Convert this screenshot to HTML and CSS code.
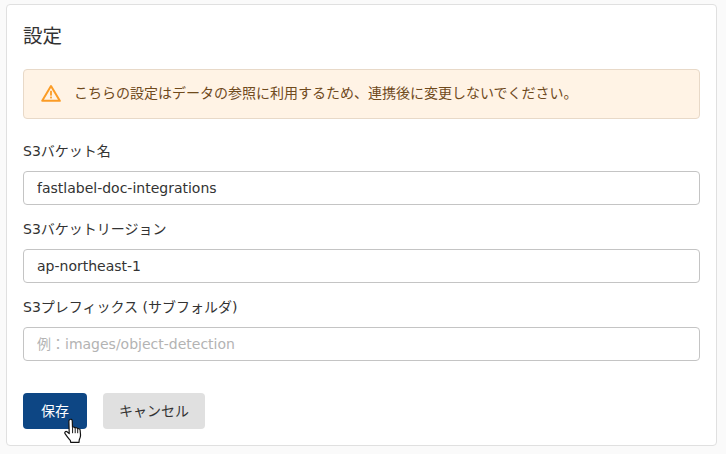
FILE: index.html
```html
<!DOCTYPE html>
<html lang="ja">
<head>
    <meta charset="UTF-8">
    <title>設定</title>
    <link rel="stylesheet" href="styles.css">
</head>
<body>

    <div class="card">
        <h1>設定</h1>

        <div class="alert">
            <svg class="alert-icon" width="20" height="18" viewBox="0 0 20 18">
                <path d="M10 2 L18.8 16.8 H1.2 Z" fill="none" stroke="#fb9c26" stroke-width="2" stroke-linejoin="round"/>
                <rect x="9.1" y="6.8" width="1.8" height="4.8" fill="#fb9c26"/>
                <rect x="9.1" y="12.6" width="1.8" height="1.8" fill="#fb9c26"/>
            </svg>
            <span class="alert-text">こちらの設定はデータの参照に利用するため、連携後に変更しないでください。</span>
        </div>

        <div class="field">
            <label for="bucket">S3バケット名</label>
            <input id="bucket" type="text" value="fastlabel-doc-integrations">
        </div>
        <div class="field">
            <label for="region">S3バケットリージョン</label>
            <input id="region" type="text" value="ap-northeast-1">
        </div>
        <div class="field">
            <label for="prefix">S3プレフィックス (サブフォルダ)</label>
            <input id="prefix" type="text" placeholder="例：images/object-detection">
        </div>

        <div class="actions">
            <button class="btn btn-save">保存</button>
            <button class="btn btn-cancel">キャンセル</button>
            <svg class="cursor" width="22" height="25" viewBox="0 0 20 23">
                <path d="M6 1.5 C7 0.8 8.3 1.3 8.4 2.5 L8.6 8.6 C9.4 8.1 10.6 8.2 11 9.2 C11.8 8.7 13 8.9 13.3 9.9 C14.2 9.5 15.4 9.9 15.6 11 L16 15.5 C16.1 17.4 15.4 18.8 14.8 20.2 L14.6 22.5 H7 L6.6 20.6 C5.2 19.2 3.4 16.6 1.8 14.4 C1 13.2 2.2 11.8 3.6 12.6 L5.6 14.4 L5.3 3 C5.3 2.4 5.5 1.9 6 1.5 Z" fill="#fff" stroke="#111" stroke-width="1.1" stroke-linejoin="round"/>
                <path d="M8.7 9 V14 M11.1 9.4 V14 M13.4 10.2 V14" fill="none" stroke="#111" stroke-width="0.9"/>
            </svg>
        </div>
    </div>

</body>
</html>
```

FILE: styles.css
```css
/* Global Styles */
body {
    font-family: 'DejaVu Sans', 'Noto Sans CJK JP', sans-serif;
    margin: 0;
    padding: 4px 9px 8px 6px;
    background: #fafafa;
    color: #333;
    font-size: 14px;
}

.card {
    background: #fff;
    border: 1px solid #e0e0e0;
    border-radius: 4px;
    padding: 17px 16px 15px 16px;
    height: 442px;
    box-sizing: border-box;
}

h1 {
    font-size: 19.5px;
    font-weight: 400;
    line-height: 30px;
    margin: 0 0 17px 0;
    color: #333;
}

.alert {
    display: flex;
    align-items: center;
    height: 50px;
    box-sizing: border-box;
    padding: 0 0 0 17px;
    gap: 13px;
    background: #fff3e5;
    border: 1px solid #e8d9c8;
    border-radius: 4px;
    color: #6f4a1c;
    margin-bottom: 21px;
}

.alert-icon {
    flex-shrink: 0;
    margin-top: -2px;
}

.alert-text {
    padding-bottom: 4px;
}

.field {
    margin-bottom: 13px;
}

.field label {
    display: block;
    line-height: 22px;
    margin-bottom: 7px;
    height: 24px;
}

.field input {
    display: block;
    width: 100%;
    height: 34px;
    box-sizing: border-box;
    padding: 0 13px;
    border: 1px solid #c4c4c4;
    border-radius: 4px;
    font-family: inherit;
    font-size: 14px;
    color: #333;
    outline: none;
}

.field input::placeholder {
    color: #b3b3b3;
    opacity: 1;
}

.actions {
    position: relative;
    display: flex;
    gap: 16px;
    margin-top: 32px;
}

.btn {
    height: 36px;
    border: none;
    border-radius: 4px;
    padding: 0 0 3px 0;
    font-family: inherit;
    font-size: 14px;
}

.btn-save {
    width: 64px;
    background: #0d4684;
    color: #fff;
}

.btn-cancel {
    width: 102px;
    background: #e0e0e0;
    color: #333;
}

.cursor {
    position: absolute;
    left: 40px;
    top: 25px;
}
```
